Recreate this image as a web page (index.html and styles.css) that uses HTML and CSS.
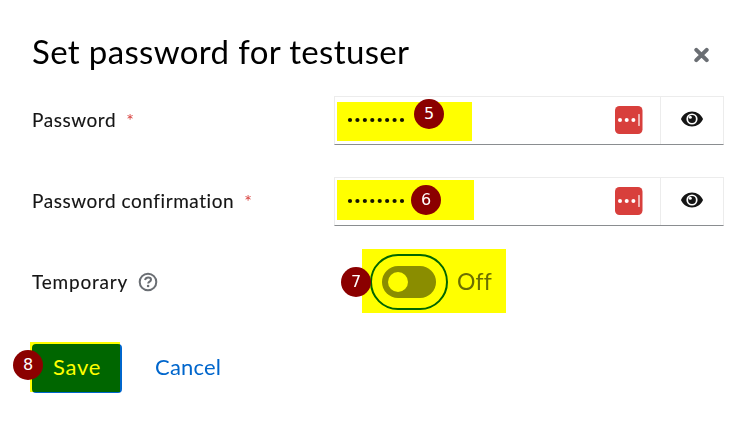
FILE: index.html
```html
<!DOCTYPE html>
<html lang="en">
<head>
<meta charset="utf-8">
<title>Set password for testuser</title>
<link rel="stylesheet" href="styles.css">
</head>
<body>
<svg class="defs" aria-hidden="true">
  <symbol id="eye" viewBox="0 0 22 16">
    <path fill="#151515" d="M11 .5C6 .5 2 3.600 .3 7.200a1.700 1.700 0 0 0 0 1.600C2 12.400 6 15.500 11 15.500s9-3.100 10.700-6.700a1.700 1.700 0 0 0 0-1.600C20 3.600 16 .5 11 .5z"/>
    <circle cx="11" cy="8" r="5.600" fill="#fff"/>
    <circle cx="11" cy="8" r="3.900" fill="#151515"/>
    <circle cx="9.300" cy="6.200" r="1.500" fill="#fff"/>
  </symbol>
  <symbol id="manager" viewBox="0 0 28 28">
    <rect width="27.500" height="28" rx="4.500" fill="#d83f3c"/>
    <circle cx="5" cy="14" r="2" fill="#fff"/><circle cx="11.700" cy="14" r="2" fill="#fff"/><circle cx="18.400" cy="14" r="2" fill="#fff"/>
    <path d="M24 8.500v11" stroke="#fff" stroke-width="1.200" stroke-linecap="round"/>
  </symbol>
  <symbol id="dots" viewBox="0 0 60 6">
    <path d="M3 3h53" stroke="#151515" stroke-width="4.200" stroke-linecap="round" stroke-dasharray="0 7.430"/>
  </symbol>
</svg>
<main class="modal">
  <header class="header">
    <h1 class="title">Set password for testuser</h1>
    <svg class="close" viewBox="0 0 15 16"><path d="M2.300 2.800l10.400 10.400M12.700 2.800L2.300 13.200" stroke="#6a6e73" stroke-width="4" stroke-linecap="round"/></svg>
  </header>
  <form class="form">
    <div class="row">
      <div class="label"><span>Password</span><span class="required">*</span></div>
      <div class="field">
        <div class="input"><svg class="dots"><use href="#dots"/></svg><svg class="manager"><use href="#manager"/></svg></div>
        <div class="reveal"><svg class="eye"><use href="#eye"/></svg></div>
        <i class="mark mark-password"></i><b class="step step-5">5</b>
      </div>
    </div>
    <div class="row">
      <div class="label"><span>Password confirmation</span><span class="required">*</span></div>
      <div class="field">
        <div class="input"><svg class="dots"><use href="#dots"/></svg><svg class="manager"><use href="#manager"/></svg></div>
        <div class="reveal"><svg class="eye"><use href="#eye"/></svg></div>
        <i class="mark mark-confirm"></i><b class="step step-6">6</b>
      </div>
    </div>
    <div class="row">
      <div class="label"><span class="temporary">Temporary</span>
        <svg class="help" viewBox="0 0 20 20"><circle cx="10" cy="10" r="8.300" fill="none" stroke="#6a6e73" stroke-width="2"/><path d="M7 8q.8-2.600 3.200-2.600c1.700 0 2.800 1 2.800 2.300 0 2-2.800 1.900-2.800 3.900" fill="none" stroke="#6a6e73" stroke-width="2"/><circle cx="10.100" cy="14" r="1.300" fill="#6a6e73"/></svg>
      </div>
      <div class="toggle">
        <span class="focus"><span class="switch"><span class="knob"></span></span></span>
        <span class="off">Off</span>
        <i class="mark mark-toggle"></i><b class="step step-7">7</b>
      </div>
    </div>
    <footer class="actions">
      <div class="save"><span>Save</span><i class="mark mark-save"></i><b class="step step-8">8</b></div>
      <span class="cancel">Cancel</span>
    </footer>
  </form>
</main>
</body>
</html>
```
FILE: styles.css
```css
* { box-sizing: border-box; }
html { background: #fff; }
body { margin: 0; width: 755px; height: 425px; overflow: hidden; background: #fff; color: #151515; font-family: Lato, sans-serif; font-variant-ligatures: none; }
svg { display: block; flex: none; }
.defs { position: absolute; width: 0; height: 0; }
.modal { padding: 31px 31px 0 32px; }
.header { display: flex; justify-content: space-between; height: 40px; }
.title { margin: 0; font-size: 33px; line-height: 40px; font-weight: 400; white-space: nowrap; color: #000; letter-spacing: .36px; }
.close { width: 15px; height: 16px; margin: 16px 15px 0 0; }
.form { padding-top: 25px; }
.row { display: grid; grid-template-columns: 302px 390px; grid-template-rows: 49px; height: 49px; margin-bottom: 32px; }
.label { display: flex; align-items: center; padding-bottom: 2px; font-size: 19px; white-space: nowrap; color: #151515; letter-spacing: .55px; -webkit-text-stroke: .12px #151515; }
.temporary { letter-spacing: .8px; }
.required { margin-left: 10px; color: #d83f3c; font-size: 18px; -webkit-text-stroke: 0; }
.help { width: 20px; height: 20px; margin: 1px 0 0 10px; }
.field { position: relative; display: flex; border: 1px solid #ececec; border-bottom-color: #8a8d90; }
.input { display: flex; flex: 1; align-items: center; justify-content: space-between; padding: 0 17px 1px 12px; }
.dots { width: 60px; height: 6px; }
.manager { width: 28px; height: 28px; }
.reveal { width: 63px; border-left: 1px solid #ececec; padding: 14px 0 0 20px; }
.eye { width: 22px; height: 16px; }
.mark { position: absolute; background: #ff0; mix-blend-mode: multiply; }
.mark-password { left: 2px; top: 5px; width: 135px; height: 39px; }
.mark-confirm { left: 2px; top: 2px; width: 137px; height: 40px; }
.mark-toggle { left: 28px; top: -9px; width: 144px; height: 64px; }
.mark-save { left: -2px; top: -2px; width: 90px; height: 50px; }
.step { position: absolute; z-index: 2; width: 30px; height: 30px; border-radius: 50%; background: #8b0000; color: #fff; font: 400 16px/30px "DejaVu Sans", sans-serif; text-align: center; }
.step-5 { left: 79px; top: 2px; }
.step-6 { left: 76px; top: 7px; }
.step-7 { left: 7px; top: 9px; }
.step-8 { left: -19px; top: 6px; letter-spacing: 0; }
.toggle { position: relative; display: flex; align-items: center; height: 49px; padding: 0 0 1px 36px; }
.focus { display: flex; flex: none; align-items: center; justify-content: center; width: 78px; height: 56px; border: 2px solid #06c; border-radius: 28px; }
.switch { width: 54px; height: 32px; padding: 6px; border-radius: 16px; background: #8a8d90; }
.knob { display: block; width: 20px; height: 20px; border-radius: 50%; background: #fff; }
.off { margin: -2px 0 0 9px; font-size: 23px; color: #6a6e73; letter-spacing: .2px; }
.actions { display: flex; align-items: center; padding-top: 5px; font-size: 22px; }
.save { position: relative; width: 90px; height: 49px; border-radius: 4px; background: #06c; color: #fff; text-align: center; line-height: 46px; letter-spacing: .7px; }
.cancel { margin: -5px 0 0 33px; color: #06c; line-height: 47px; letter-spacing: .2px; }
```
